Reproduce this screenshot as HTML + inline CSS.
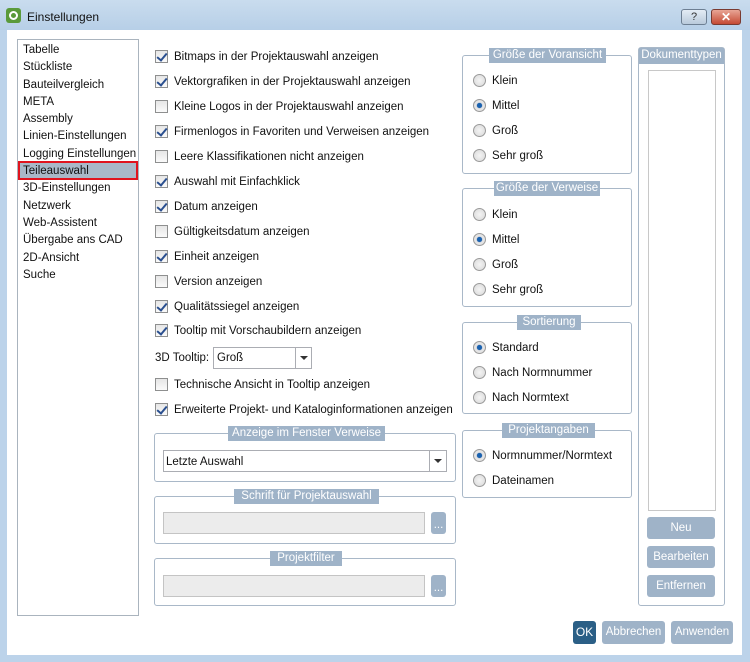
<!DOCTYPE html>
<html><head><meta charset="utf-8"><style>
*{box-sizing:border-box}
body{margin:0;width:750px;height:662px;overflow:hidden;background:#bcd3ea;font-family:"Liberation Sans",sans-serif;font-size:11.5px;color:#111;position:relative}
.a{position:absolute}
.client{left:7px;top:30px;width:735px;height:625px;background:#fff}
.t{white-space:nowrap;line-height:14px}
.cb{width:13px;height:13px;border:1px solid #8e8f8f;background:linear-gradient(#e6e6e6,#fafafa);}
.cb.on::after{content:"";position:absolute;left:3px;top:0px;width:4px;height:8px;border:solid #2a4f8f;border-width:0 2px 2px 0;transform:rotate(40deg)}
.rb{width:13px;height:13px;border-radius:50%;border:1px solid #9a9a9a;background:radial-gradient(#f4f4f4,#d8d8d8)}
.rb.on::after{content:"";position:absolute;left:3px;top:3px;width:5px;height:5px;border-radius:50%;background:#1a62b0;box-shadow:0 0 1px #0a3a80}
.grp{border:1px solid #a9b8c8;border-radius:3px}
.lab{background:#9fb3c8;color:#fff;text-align:center;line-height:15px;height:15px;white-space:nowrap;font-size:11.5px}
.btn{background:#9fb3c8;color:#fff;border-radius:3px;text-align:center;line-height:22px;font-size:11.5px}
.fld{background:#ececec;border:1px solid #c4c4c4}
</style></head><body>
<div class="a" style="left:0;top:0;width:750px;height:30px;background:linear-gradient(#c9dcee,#b7cfe7)"></div>
<div class="a" style="left:6px;top:8px;width:15px;height:15px;border-radius:3px;background:#5a9a3a"></div>
<div class="a" style="left:9px;top:11px;width:9px;height:9px;border-radius:50%;border:2px solid #fff"></div>
<div class="a t" style="left:27px;top:10px;font-size:12px">Einstellungen</div>
<div class="a" style="left:681px;top:9px;width:26px;height:16px;border:1px solid #6d7f93;border-radius:3px;background:linear-gradient(#e3ecf5,#b9cadb);text-align:center;font-size:11px;line-height:14px;color:#333">?</div>
<div class="a" style="left:711px;top:9px;width:30px;height:16px;border:1px solid #7a3a30;border-radius:3px;background:linear-gradient(#e8a595,#c54a33);text-align:center;font-size:12px;line-height:14px;color:#fff;font-weight:bold">✕</div>
<div class="a client"></div>

<div class="a" style="left:17px;top:39px;width:122px;height:577px;border:1px solid #aab4be"></div>
<div class="a" style="left:18px;top:161px;width:120px;height:19px;background:#a9b8c8;border:2px solid #e0141e"></div>
<div class="a t" style="left:23px;top:42px;line-height:17.3px;font-size:11.5px">Tabelle<br>Stückliste<br>Bauteilvergleich<br>META<br>Assembly<br>Linien-Einstellungen<br>Logging Einstellungen<br>Teileauswahl<br>3D-Einstellungen<br>Netzwerk<br>Web-Assistent<br>Übergabe ans CAD<br>2D-Ansicht<br>Suche</div>

<div class="a cb on" style="left:155px;top:50px"></div><div class="a t" style="left:174px;top:50px">Bitmaps in der Projektauswahl anzeigen</div>
<div class="a cb on" style="left:155px;top:75px"></div><div class="a t" style="left:174px;top:75px">Vektorgrafiken in der Projektauswahl anzeigen</div>
<div class="a cb" style="left:155px;top:100px"></div><div class="a t" style="left:174px;top:100px">Kleine Logos in der Projektauswahl anzeigen</div>
<div class="a cb on" style="left:155px;top:125px"></div><div class="a t" style="left:174px;top:125px">Firmenlogos in Favoriten und Verweisen anzeigen</div>
<div class="a cb" style="left:155px;top:150px"></div><div class="a t" style="left:174px;top:150px">Leere Klassifikationen nicht anzeigen</div>
<div class="a cb on" style="left:155px;top:175px"></div><div class="a t" style="left:174px;top:175px">Auswahl mit Einfachklick</div>
<div class="a cb on" style="left:155px;top:200px"></div><div class="a t" style="left:174px;top:200px">Datum anzeigen</div>
<div class="a cb" style="left:155px;top:225px"></div><div class="a t" style="left:174px;top:225px">Gültigkeitsdatum anzeigen</div>
<div class="a cb on" style="left:155px;top:250px"></div><div class="a t" style="left:174px;top:250px">Einheit anzeigen</div>
<div class="a cb" style="left:155px;top:275px"></div><div class="a t" style="left:174px;top:275px">Version anzeigen</div>
<div class="a cb on" style="left:155px;top:300px"></div><div class="a t" style="left:174px;top:300px">Qualitätssiegel anzeigen</div>
<div class="a cb on" style="left:155px;top:324px"></div><div class="a t" style="left:174px;top:324px">Tooltip mit Vorschaubildern anzeigen</div>
<div class="a t" style="left:155px;top:351px">3D Tooltip:</div>
<div class="a" style="left:213px;top:347px;width:99px;height:22px;border:1px solid #abadb3;background:#fff"></div>
<div class="a t" style="left:217px;top:351px">Groß</div>
<div class="a" style="left:295px;top:348px;width:1px;height:20px;background:#abadb3"></div>
<div class="a" style="left:300px;top:356px;border:4px solid transparent;border-top:4px solid #333"></div>
<div class="a cb" style="left:155px;top:378px"></div><div class="a t" style="left:174px;top:378px">Technische Ansicht in Tooltip anzeigen</div>
<div class="a cb on" style="left:155px;top:403px"></div><div class="a t" style="left:174px;top:403px">Erweiterte Projekt- und Kataloginformationen anzeigen</div>

<div class="a grp" style="left:154px;top:433px;width:302px;height:49px"></div>
<div class="a lab" style="left:228px;top:426px;width:157px">Anzeige im Fenster Verweise</div>
<div class="a" style="left:163px;top:450px;width:284px;height:22px;border:1px solid #abadb3;background:#fff"></div>
<div class="a t" style="left:166px;top:455px">Letzte Auswahl</div>
<div class="a" style="left:429px;top:451px;width:1px;height:20px;background:#abadb3"></div>
<div class="a" style="left:434px;top:459px;border:4px solid transparent;border-top:4px solid #333"></div>

<div class="a grp" style="left:154px;top:496px;width:302px;height:48px"></div>
<div class="a lab" style="left:234px;top:489px;width:145px">Schrift für Projektauswahl</div>
<div class="a fld" style="left:163px;top:512px;width:262px;height:22px"></div>
<div class="a btn" style="left:431px;top:512px;width:15px;height:22px;line-height:26px">...</div>

<div class="a grp" style="left:154px;top:558px;width:302px;height:48px"></div>
<div class="a lab" style="left:270px;top:551px;width:72px">Projektfilter</div>
<div class="a fld" style="left:163px;top:575px;width:262px;height:22px"></div>
<div class="a btn" style="left:431px;top:575px;width:15px;height:22px;line-height:26px">...</div>

<div class="a grp" style="left:462px;top:55px;width:170px;height:119px"></div>
<div class="a lab" style="left:489px;top:48px;width:117px">Größe der Voransicht</div>
<div class="a rb" style="left:473px;top:74px"></div><div class="a t" style="left:492px;top:74px">Klein</div>
<div class="a rb on" style="left:473px;top:99px"></div><div class="a t" style="left:492px;top:99px">Mittel</div>
<div class="a rb" style="left:473px;top:124px"></div><div class="a t" style="left:492px;top:124px">Groß</div>
<div class="a rb" style="left:473px;top:149px"></div><div class="a t" style="left:492px;top:149px">Sehr groß</div>

<div class="a grp" style="left:462px;top:188px;width:170px;height:119px"></div>
<div class="a lab" style="left:494px;top:181px;width:106px">Größe der Verweise</div>
<div class="a rb" style="left:473px;top:208px"></div><div class="a t" style="left:492px;top:208px">Klein</div>
<div class="a rb on" style="left:473px;top:233px"></div><div class="a t" style="left:492px;top:233px">Mittel</div>
<div class="a rb" style="left:473px;top:258px"></div><div class="a t" style="left:492px;top:258px">Groß</div>
<div class="a rb" style="left:473px;top:283px"></div><div class="a t" style="left:492px;top:283px">Sehr groß</div>

<div class="a grp" style="left:462px;top:322px;width:170px;height:92px"></div>
<div class="a lab" style="left:517px;top:315px;width:64px">Sortierung</div>
<div class="a rb on" style="left:473px;top:341px"></div><div class="a t" style="left:492px;top:341px">Standard</div>
<div class="a rb" style="left:473px;top:366px"></div><div class="a t" style="left:492px;top:366px">Nach Normnummer</div>
<div class="a rb" style="left:473px;top:391px"></div><div class="a t" style="left:492px;top:391px">Nach Normtext</div>

<div class="a grp" style="left:462px;top:430px;width:170px;height:68px"></div>
<div class="a lab" style="left:502px;top:423px;width:93px">Projektangaben</div>
<div class="a rb on" style="left:473px;top:449px"></div><div class="a t" style="left:492px;top:449px">Normnummer/Normtext</div>
<div class="a rb" style="left:473px;top:474px"></div><div class="a t" style="left:492px;top:474px">Dateinamen</div>

<div class="a grp" style="left:638px;top:47px;width:87px;height:559px"></div>
<div class="a lab" style="left:639px;top:48px;width:85px;height:16px">Dokumenttypen</div>
<div class="a" style="left:648px;top:70px;width:68px;height:441px;border:1px solid #c8c8c8"></div>
<div class="a btn" style="left:647px;top:517px;width:68px;height:22px">Neu</div>
<div class="a btn" style="left:647px;top:546px;width:68px;height:22px">Bearbeiten</div>
<div class="a btn" style="left:647px;top:575px;width:68px;height:22px">Entfernen</div>

<div class="a btn" style="left:573px;top:621px;width:23px;height:23px;background:#2b5f86;font-size:12px">OK</div>
<div class="a btn" style="left:602px;top:621px;width:63px;height:23px">Abbrechen</div>
<div class="a btn" style="left:671px;top:621px;width:62px;height:23px">Anwenden</div>
</body></html>
